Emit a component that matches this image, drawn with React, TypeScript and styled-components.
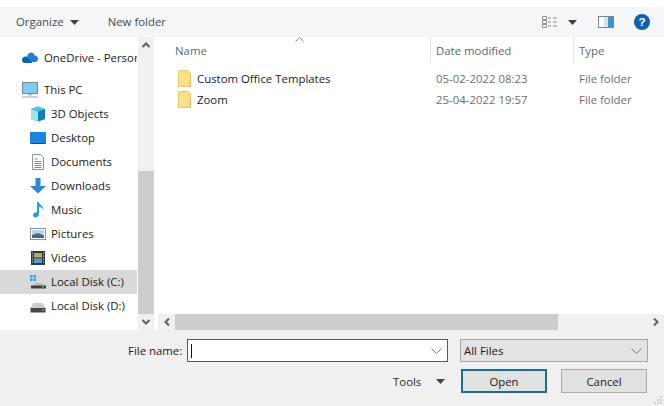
import React from "react";
import styled, { createGlobalStyle } from "styled-components";

const Global = createGlobalStyle`
  html, body { margin: 0; padding: 0; background: #fff; }
  #root { width: 664px; height: 406px; overflow: hidden; }
  * { box-sizing: border-box; }
`;
const Dialog = styled.div`
  width: 664px; height: 406px; display: flex; flex-direction: column; background: #fff;
  font-family: "Open Sans", "Noto Sans", sans-serif; font-size: 11.4px; color: #1a1a1a;
  padding-top: 7px;
`;
const Toolbar = styled.div`
  height: 30px; flex: none; background: #f5f6f7; display: flex; align-items: center; padding: 0 0 0 16px; color: #3f4a57;
`;
const ToolText = styled.span<{ $ml?: number; $mr?: number }>`
  margin-left: ${p => p.$ml || 0}px; margin-right: ${p => p.$mr || 0}px; margin-bottom: 2px; white-space: nowrap;
`;
const Gap = styled.span<{ $w: number }>`width: ${p => p.$w}px; flex: none;`;
const Spacer = styled.div`flex: 1;`;
const Main = styled.div`height: 293px; flex: none; display: flex; background: #fff;`;
const Nav = styled.div`width: 137px; flex: none; padding-top: 9px; display: flex; flex-direction: column; overflow: hidden;`;
const NavRow = styled.div<{ $indent: number; $sel?: boolean; $mb?: number }>`
  height: 24px; flex: none; display: flex; align-items: center; white-space: nowrap;
  padding-left: ${p => p.$indent}px; gap: ${p => (p.$indent > 25 ? 5 : 6)}px;
  background: ${p => (p.$sel ? "#d9d9d9" : "transparent")};
  margin-bottom: ${p => p.$mb || 0}px;
`;
const NavLabel = styled.span`margin-bottom: 2px;`;
const VBar = styled.div`
  width: 16px; margin-left: 1px; flex: none; background: #f0f0f0; display: flex; flex-direction: column;
`;
const VArrow = styled.div`height: 16px; flex: none; display: flex; align-items: center; justify-content: center;`;
const VTrack = styled.div`height: 118px; flex: none;`;
const VThumb = styled.div`flex: 1; background: #cdcdcd;`;
const Content = styled.div`margin-left: 4px; flex: 1; min-width: 0; display: flex; flex-direction: column; position: relative;`;
const SortMark = styled.div`position: absolute; left: 137px; top: 0; line-height: 0;`;
const Header = styled.div`
  height: 26px; flex: none; display: grid; grid-template-columns: 272px 143px 1fr; color: #56667a;
`;
const HeadCell = styled.div<{ $line?: boolean }>`
  padding-left: ${p => (p.$line ? 5 : 17)}px; padding-top: 6px; height: 26px;
  border-left: ${p => (p.$line ? "1px solid #e5e5e5" : "none")};
`;
const List = styled.div`flex: 1; padding-top: 5px; display: flex; flex-direction: column;`;
const Row = styled.div`
  height: 21px; flex: none; display: grid; grid-template-columns: 272px 143px 1fr; align-items: center;
`;
const NameCell = styled.div`display: flex; align-items: center; gap: 5px; padding-left: 20px; color: #1a1a1a;`;
const MetaCell = styled.div`padding-left: 6px; color: #6d6d6d; white-space: nowrap;`;
const HBar = styled.div`height: 16px; flex: none; display: flex; background: #f0f0f0;`;
const HArrow = styled.div`width: 17px; flex: none; display: flex; align-items: center; justify-content: center;`;
const HThumb = styled.div`width: 383px; flex: none; background: #cdcdcd;`;
const HTrack = styled.div`flex: 1;`;
const Footer = styled.div`flex: 1; background: #f0f0f0; display: flex; flex-direction: column; padding-top: 9px; position: relative;`;
const FormRow = styled.div`display: flex; align-items: center; height: 23px; flex: none;`;
const Label = styled.label`margin-left: 128px; width: 59px; flex: none; color: #1a1a1a;`;
const Input = styled.div`
  width: 261px; height: 23px; border: 1px solid #1a6e9f; background: #fff; display: flex; align-items: center;
  justify-content: space-between; padding: 0 5px 0 3px;
`;
const Caret = styled.div`width: 1px; height: 14px; background: #111;`;
const Filter = styled.div`
  margin-left: 12px; width: 188px; height: 23px; background: #e3e3e3; border: 1px solid #a8a8a8; display: flex;
  align-items: center; justify-content: space-between; padding: 0 5px 0 3px; color: #1a1a1a;
`;
const Actions = styled.div`display: flex; align-items: center; height: 24px; margin-top: 7px; flex: none;`;
const Tools = styled.div`margin-left: 393px; width: 68px; display: flex; align-items: center; gap: 15px; color: #2b2b2b;`;
const Btn = styled.button<{ $primary?: boolean }>`
  width: 86px; height: 24px; font: inherit; color: #1a1a1a; background: #e1e1e1; padding: 0;
  border: ${p => (p.$primary ? "2px solid #1a6e9f" : "1px solid #adadad")};
  margin-right: ${p => (p.$primary ? 14 : 0)}px;
`;
const Grip = styled.div`position: absolute; right: 1px; bottom: 1px; line-height: 0;`;

const Tri = () => <svg width="9" height="5" viewBox="0 0 9 5"><path d="M0 0h9L4.5 5z" fill="#3a4350" /></svg>;
const Chev = ({ d, c = "#606060" }: { d: string; c?: string }) => <svg width="10" height="10" viewBox="0 0 10 10"><path d={d} fill="none" stroke={c} strokeWidth="2" /></svg>;
const Drop = () => <svg width="11" height="6" viewBox="0 0 11 6"><path d="M.5.5l5 5 5-5" fill="none" stroke="#7a7a7a" /></svg>;

const Ic = ({ children }: { children: React.ReactNode }) => <svg width="16" height="16" viewBox="0 0 16 16" style={{ flex: "none" }}>{children}</svg>;
const OneDrive = () => <Ic><path d="M5 6.500c.8-2.500 2.300-4 4-4 1.700 0 3 1 3.700 3 2-.2 3.300 1.400 3.300 3.300 0 2-1.200 3.200-3 3.200H7z" fill="#1f7fd0" /><path d="M0 10c0-2 1.400-3.500 3.200-3.500.6 0 1.200.1 1.800.5l5.500 6H2.500C1 13 0 11.500 0 10z" fill="#0f62b0" /></Ic>;
const PC = () => <Ic><rect x="0.500" y="0.500" width="15" height="11" fill="#7fcdf2" stroke="#7c8794" /><path d="M6 12h4v1.500H6z" fill="#b5bcc4" /><path d="M0 14.500h16v1H0z" fill="#9aa3ad" /></Ic>;
const Cube = () => <Ic><path d="M8 .5L15 3v10l-7 2.500L1 13V3z" fill="#1aa3c9" /><path d="M1 3l7 2.500V15.500L1 13z" fill="#9be6e8" /><path d="M8 5.500l7-2.500v10l-7 2.500z" fill="#0e7fb8" /><path d="M8 .5L15 3 8 5.500 1 3z" fill="#4fc4dc" /></Ic>;
const Desk = () => <Ic><rect x="0" y="2" width="16" height="12" rx=".5" fill="#1b85e0" /><path d="M1 13.500h14" stroke="#0c4f94" /></Ic>;
const Doc = () => <Ic><path d="M2.500.500h8l3 3v12h-11z" fill="#fff" stroke="#8a949e" /><path d="M4.500 5h3M4.500 7.500h7M4.500 9.500h7M4.500 11.500h7M4.500 13.500h7" stroke="#6f8fa8" /></Ic>;
const Down = () => <Ic><path d="M5.500 0h5v8H16l-8 7.500L0 8h5.500z" fill="#2f86d8" /></Ic>;
const Music = () => <Ic><path d="M7 0h2c0 3 5 3.500 4.500 8-.7-2-2.500-3-4.500-3.200V12c0 2-1.700 3.500-3.800 3.500C3.500 15.500 3 14 3 13c0-1.700 1.800-3 4-2.800z" fill="#27a0df" /></Ic>;
const Pic = () => <Ic><rect x="0.500" y="2.500" width="15" height="11" fill="#fff" stroke="#8c949c" /><rect x="2" y="4" width="12" height="8" fill="#b8d4e8" /><path d="M2 9l6-2 6 2.500V12H2z" fill="#3f6a85" /></Ic>;
const Vid = () => <Ic><rect x="1" y="1" width="14" height="14" fill="#2f3a45" /><rect x="4" y="3" width="8" height="4.500" fill="#c0a850" /><rect x="4" y="8.500" width="8" height="4.500" fill="#5d9bc9" /><path d="M2 3h1M2 6h1M2 9h1M2 12h1M13 3h1M13 6h1M13 9h1M13 12h1" stroke="#e0e0e0" /></Ic>;
const DiskC = () => <Ic><path d="M0 1h2.500v2.500H0zM3.500 1H6v2.500H3.500zM0 4.500h2.500V7H0zM3.500 4.500H6V7H3.500z" fill="#1ea6e8" /><path d="M6 9h5l4 2.500H1z" fill="#b9bec3" /><rect x="1" y="11.500" width="15" height="3" fill="#3d4043" /><rect x="12" y="12.500" width="2" height="1" fill="#9fd06a" /></Ic>;
const DiskD = () => <Ic><path d="M3.500 5h9L16 10.500H0z" fill="#c9cdd1" /><rect x="0.500" y="10" width="15" height="4.500" fill="#45484b" /><rect x="12" y="11.500" width="2" height="1" fill="#9fd06a" /></Ic>;
const Folder = () => <svg width="14" height="17" viewBox="0 0 14 17" style={{ flex: "none" }}><path d="M.5 1.500A1 1 0 0 1 1.500.5h8a1 1 0 0 1 1 1V3h2v13.500h-12z" fill="#fce08a" stroke="#e7c766" /><path d="M11 10v6.500" stroke="#e7c766" /></svg>;

const Views = () => <svg width="16" height="12" viewBox="0 0 16 12"><path d="M.5.5h4v3h-4zM.5 4.500h4v3h-4zM.5 8.500h4v3h-4z" fill="#fff" stroke="#8a8f96" /><path d="M6 2h3M11 2h4M6 6h3M11 6h4M6 10h3M11 10h4" stroke="#8a8f96" /></svg>;
const Pane = () => <svg width="16" height="12" viewBox="0 0 16 12"><rect x="0.500" y="0.500" width="15" height="11" fill="#fff" stroke="#7b8794" /><rect x="10" y="1" width="5" height="10" fill="#3f93cf" /><rect x="6" y="1" width="4" height="10" fill="#cfe6f6" /></svg>;
const Help = () => <svg width="16" height="16" viewBox="0 0 16 16"><circle cx="8" cy="8" r="8" fill="#0f63ad" /><text x="8" y="12" textAnchor="middle" fontFamily="Liberation Sans, sans-serif" fontWeight="700" fontSize="11.500" fill="#fff">?</text></svg>;

const navItems: [string, React.ReactNode, number, boolean?, number?][] = [
  ["OneDrive - Personal", <OneDrive />, 22, false, 8],
  ["This PC", <PC />, 22],
  ["3D Objects", <Cube />, 30],
  ["Desktop", <Desk />, 30],
  ["Documents", <Doc />, 30],
  ["Downloads", <Down />, 30],
  ["Music", <Music />, 30],
  ["Pictures", <Pic />, 30],
  ["Videos", <Vid />, 30],
  ["Local Disk (C:)", <DiskC />, 30, true],
  ["Local Disk (D:)", <DiskD />, 30],
];
const files = [
  ["Custom Office Templates", "05-02-2022 08:23", "File folder"],
  ["Zoom", "25-04-2022 19:57", "File folder"],
];

export default function App() {
  return (
    <Dialog>
      <Global />
      <Toolbar>
        <ToolText $mr={6}>Organize</ToolText>
        <Tri />
        <ToolText $ml={29}>New folder</ToolText>
        <Spacer />
        <Views />
        <Gap $w={10} />
        <Tri />
        <Gap $w={21} />
        <Pane />
        <Gap $w={20} />
        <Help />
        <Gap $w={14} />
      </Toolbar>
      <Main>
        <Nav>
          {navItems.map(([label, icon, indent, sel, mb]) => (
            <NavRow key={label} $indent={indent} $sel={sel} $mb={mb}>{icon}<NavLabel>{label}</NavLabel></NavRow>
          ))}
        </Nav>
        <VBar>
          <VArrow><Chev d="M1.500 7L5 3.500 8.500 7" /></VArrow>
          <VTrack />
          <VThumb />
          <VArrow><Chev d="M1.500 3L5 6.500 8.500 3" /></VArrow>
        </VBar>
        <Content>
          <SortMark><svg width="9" height="5" viewBox="0 0 9 5"><path d="M.5 4.500l4-4 4 4" fill="none" stroke="#8a8a8a" /></svg></SortMark>
          <Header>
            <HeadCell>Name</HeadCell>
            <HeadCell $line>Date modified</HeadCell>
            <HeadCell $line>Type</HeadCell>
          </Header>
          <List>
            {files.map(f => (
              <Row key={f[0]}>
                <NameCell><Folder /><span>{f[0]}</span></NameCell>
                <MetaCell>{f[1]}</MetaCell>
                <MetaCell>{f[2]}</MetaCell>
              </Row>
            ))}
          </List>
          <HBar>
            <HArrow><Chev d="M7 1.500L3.500 5 7 8.500" /></HArrow>
            <HThumb />
            <HTrack />
            <HArrow><Chev d="M3 1.500L6.500 5 3 8.500" /></HArrow>
          </HBar>
        </Content>
      </Main>
      <Footer>
        <FormRow>
          <Label>File name:</Label>
          <Input><Caret /><Drop /></Input>
          <Filter><span>All Files</span><Drop /></Filter>
        </FormRow>
        <Actions>
          <Tools><span>Tools</span><Tri /></Tools>
          <Btn $primary>Open</Btn>
          <Btn>Cancel</Btn>
        </Actions>
        <Grip><svg width="10" height="10" viewBox="0 0 10 10"><path d="M7 1h2v2H7zM4 4h2v2H4zM7 4h2v2H7zM1 7h2v2H1zM4 7h2v2H4zM7 7h2v2H7z" fill="#d0d0d0" /></svg></Grip>
      </Footer>
    </Dialog>
  );
}
